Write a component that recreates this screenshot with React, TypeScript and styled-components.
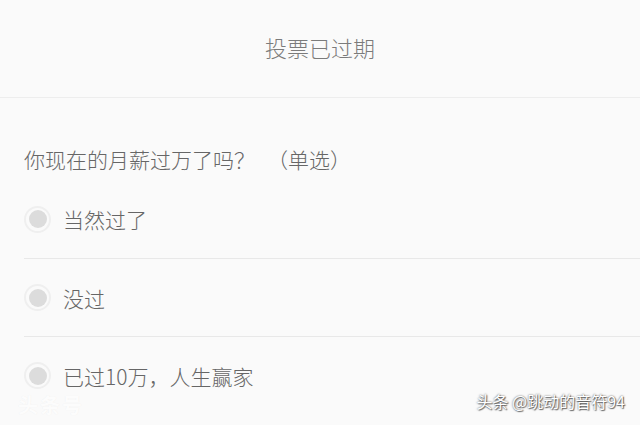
import React from 'react';
import styled, { createGlobalStyle } from 'styled-components';

const GlobalStyle = createGlobalStyle`
  html, body {
    margin: 0;
    padding: 0;
    background: #fafafa;
  }
  body {
    font-family: "Noto Sans CJK SC", "Noto Sans", sans-serif;
  }
`;

const Page = styled.div`
  position: relative;
  width: 640px;
  height: 425px;
  overflow: hidden;
  background: #fafafa;
`;

const Header = styled.div`
  height: 98px;
  padding-bottom: 4px;
  box-sizing: border-box;
  display: flex;
  align-items: center;
  justify-content: center;
  border-bottom: 1px solid #ededed;
  font-size: 22px;
  font-weight: 300;
  color: #7b7b7b;
`;

const Body = styled.div`
  padding-left: 24px;
`;

const Question = styled.div`
  padding-top: 51px;
  padding-bottom: 10px;
  height: 21px;
  line-height: 21px;
  font-size: 21px;
  font-weight: 300;
  color: #666;
`;

const Hint = styled.span`
  margin-left: 12px;
`;

const Option = styled.div<{ $first?: boolean }>`
  height: 78px;
  display: flex;
  align-items: center;
  border-top: ${(p) => (p.$first ? 'none' : '1px solid #e8e8e8')};
  box-sizing: border-box;
`;

const Radio = styled.div`
  width: 27px;
  height: 27px;
  border-radius: 50%;
  border: 2px solid #efefef;
  box-sizing: border-box;
  display: flex;
  align-items: center;
  justify-content: center;
  margin-right: 12px;
  background: #fafafa;
`;

const Dot = styled.div`
  width: 18px;
  height: 18px;
  border-radius: 50%;
  background: #dcdcdc;
`;

const Label = styled.span`
  font-size: 21px;
  font-weight: 300;
  color: #666;
`;

const Watermark = styled.div`
  position: absolute;
  right: 15px;
  bottom: 12px;
  font-size: 16px;
  color: #fff;
  text-shadow: 0 0 2px rgba(0, 0, 0, 0.7), 1px 1px 1px rgba(0, 0, 0, 0.5);
`;

const FaintMark = styled.div`
  position: absolute;
  left: 18px;
  bottom: 6px;
  font-size: 20px;
  font-weight: 700;
  letter-spacing: 2px;
  color: rgba(255, 255, 255, 0.85);
  text-shadow: 0 0 1px rgba(0, 0, 0, 0.06);
`;

const options = ['当然过了', '没过', '已过10万，人生赢家'];

const App = () => {
  return (
    <Page>
      <GlobalStyle />
      <Header>投票已过期</Header>
      <Body>
        <Question>
          你现在的月薪过万了吗？<Hint>（单选）</Hint>
        </Question>
        {options.map((text, i) => (
          <Option key={text} $first={i === 0}>
            <Radio>
              <Dot />
            </Radio>
            <Label>{text}</Label>
          </Option>
        ))}
      </Body>
      <FaintMark>头条号</FaintMark>
      <Watermark>头条 @跳动的音符94</Watermark>
    </Page>
  );
};

export default App;
